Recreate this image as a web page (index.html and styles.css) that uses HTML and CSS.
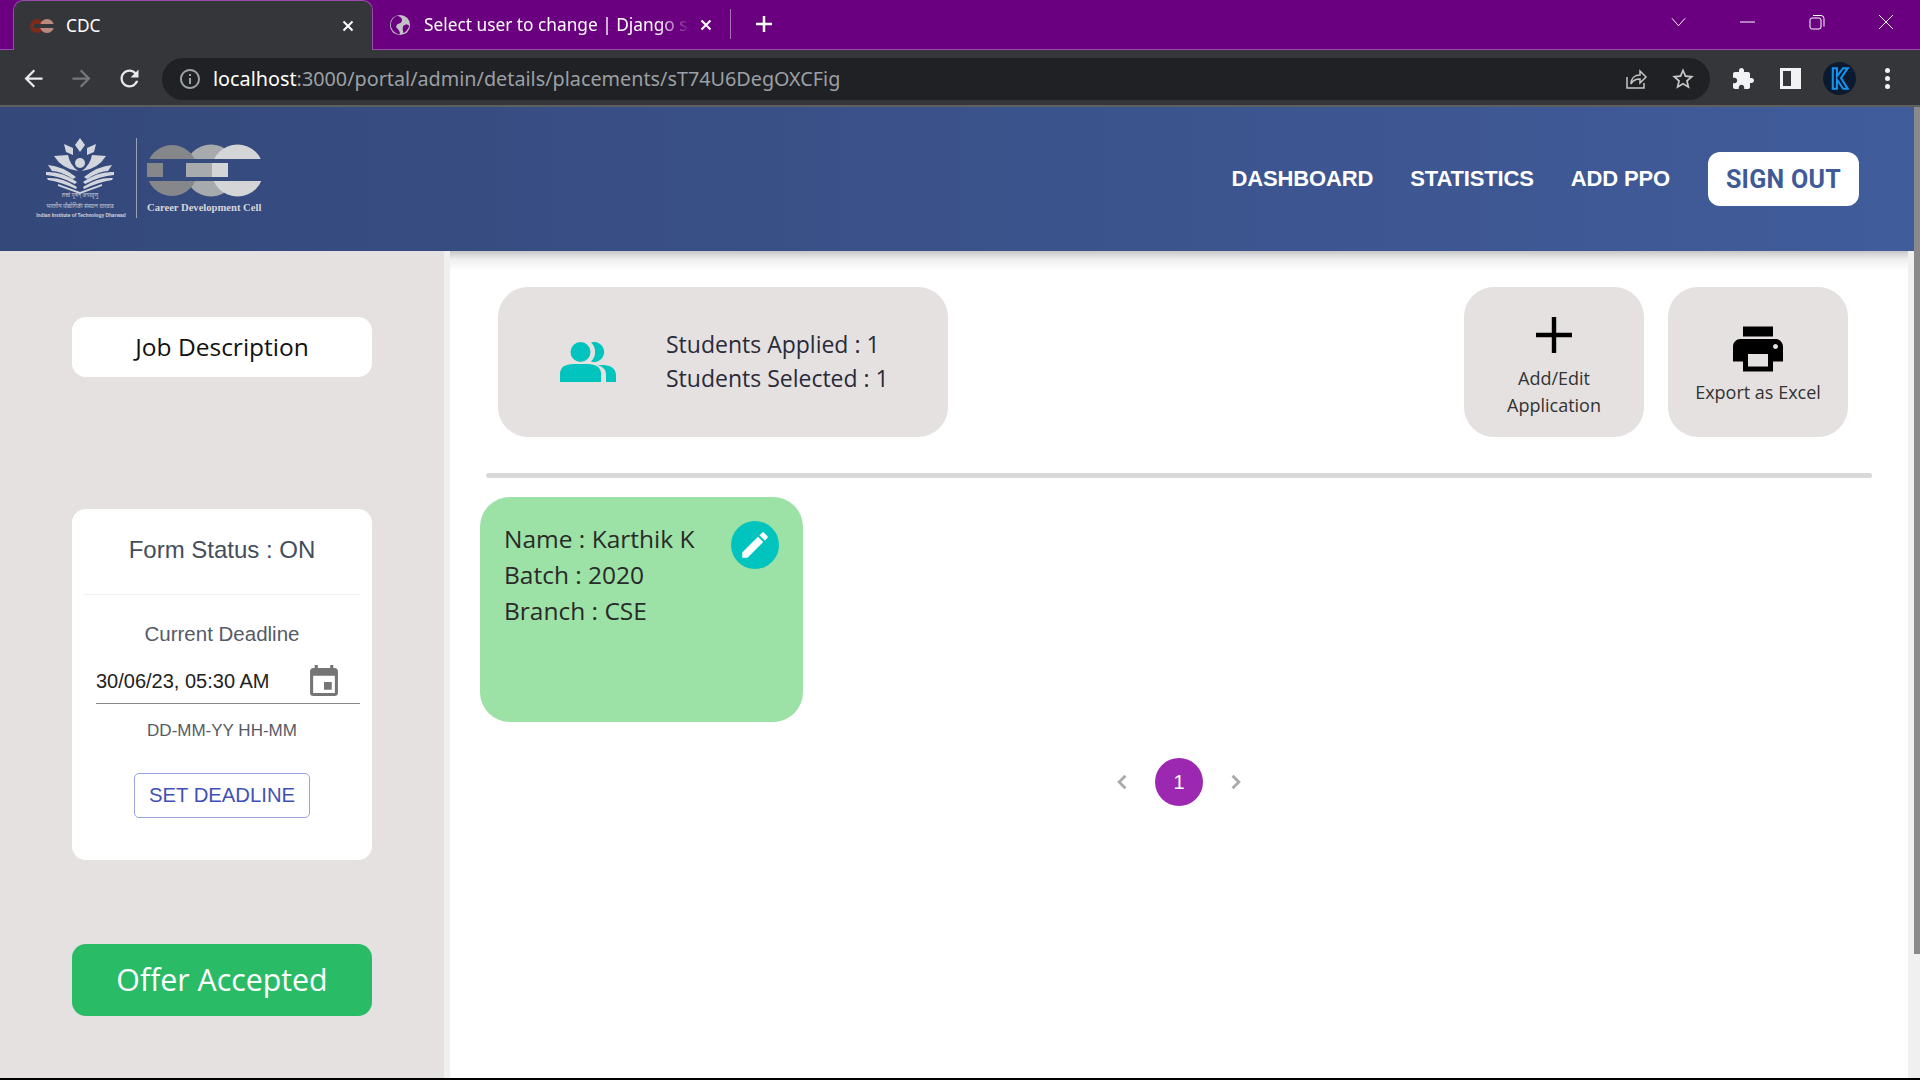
FILE: index.html
```html
<!DOCTYPE html>
<html lang="en">
<head>
  <meta charset="UTF-8" />
  <title>CDC</title>
  <link rel="stylesheet" href="styles.css">
</head>
<body>
  <!-- browser chrome -->
  <div class="tabbar">
    <div class="tab tab-active">
      <svg class="favicon" viewBox="0 0 24 14"><circle cx="7" cy="7" r="7" fill="#7d2a1c"/><circle cx="17" cy="7" r="7" fill="#b9897f"/><rect x="4" y="5" width="20" height="4" fill="#35363a"/></svg>
      <span class="tab-title">CDC</span>
      <svg class="tab-close" viewBox="0 0 12 12"><path d="M1.5 1.5l9 9M10.5 1.5l-9 9"/></svg>
    </div>
    <div class="tab tab-other">
      <svg class="favicon globe" viewBox="0 0 24 24"><circle cx="12" cy="12" r="11" fill="#c4c0c8"/><path d="M10 2c3 2 5 3 4 6s-5 2-6 5 4 3 4 9c-5 0-10-5-10-10S6 2 10 2zM17 12c3-1 4 0 5 1-1 3-3 6-6 8-1-3-2-8 1-9z" fill="#6a007f"/></svg>
      <span class="tab-title tab-fade">Select user to change | Django site admin</span>
      <svg class="tab-close" viewBox="0 0 12 12"><path d="M1.5 1.5l9 9M10.5 1.5l-9 9"/></svg>
    </div>
    <div class="tab-sep"></div>
    <svg class="new-tab" viewBox="0 0 18 18"><path d="M9 1v16M1 9h16"/></svg>
    <div class="window-btns">
      <svg viewBox="0 0 16 10" class="win-chevron"><path d="M1 1l7 8 7-8"/></svg>
      <svg viewBox="0 0 16 16" class="win-min"><path d="M0 8h15"/></svg>
      <svg viewBox="0 0 16 16" class="win-max"><rect x="1" y="4" width="11" height="11" rx="2"/><path d="M4 1.500h8a3 3 0 0 1 3 3v8"/></svg>
      <svg viewBox="0 0 16 16" class="win-close"><path d="M1 1l14 14M15 1L1 15"/></svg>
    </div>
  </div>

  <div class="toolbar">
    <svg class="nav-icon" viewBox="0 0 24 24"><path d="M20 11H7.830l5.590-5.590L12 4l-8 8 8 8 1.410-1.410L7.830 13H20v-2z"/></svg>
    <svg class="nav-icon nav-off" viewBox="0 0 24 24"><path d="M12 4l-1.410 1.410L16.170 11H4v2h12.170l-5.580 5.590L12 20l8-8z"/></svg>
    <svg class="nav-icon" viewBox="0 0 24 24"><path d="M17.650 6.350C16.200 4.900 14.210 4 12 4c-4.420 0-7.990 3.580-7.990 8s3.570 8 7.990 8c3.730 0 6.840-2.550 7.730-6h-2.080c-.82 2.330-3.040 4-5.650 4-3.310 0-6-2.690-6-6s2.690-6 6-6c1.660 0 3.140.69 4.220 1.780L13 11h7V4l-2.350 2.350z"/></svg>
    <div class="omnibox">
      <svg class="info-icon" viewBox="0 0 24 24"><path d="M11 7h2v2h-2zm0 4h2v6h-2zm1-9C6.480 2 2 6.480 2 12s4.480 10 10 10 10-4.480 10-10S17.520 2 12 2zm0 18c-4.410 0-8-3.590-8-8s3.590-8 8-8 8 3.590 8 8-3.590 8-8 8z"/></svg>
      <span class="url"><span class="url-host">localhost</span>:3000/portal/admin/details/placements/sT74U6DegOXCFig</span>
      <svg class="share-icon" viewBox="0 0 24 24"><path d="M3 10v11h17v-5M7 17c0-6 4-9 9-9V4l6 6-6 6v-4c-4 0-7 1-9 5z"/></svg>
      <svg class="star-icon" viewBox="0 0 24 24"><path d="M22 9.240l-7.190-.62L12 2 9.190 8.630 2 9.240l5.460 4.730L5.820 21 12 17.270 18.180 21l-1.630-7.030L22 9.240zM12 15.400l-3.760 2.270 1-4.280-3.320-2.880 4.380-.38L12 6.100l1.710 4.040 4.380.38-3.320 2.880 1 4.280L12 15.400z"/></svg>
    </div>
    <svg class="ext-icon" viewBox="0 0 24 24"><path d="M20.500 11H19V7c0-1.100-.9-2-2-2h-4V3.500C13 2.120 11.880 1 10.500 1S8 2.120 8 3.500V5H4c-1.100 0-1.990.9-1.990 2v3.800H3.500c1.490 0 2.700 1.210 2.700 2.700s-1.210 2.700-2.700 2.700H2V20c0 1.100.9 2 2 2h3.800v-1.500c0-1.490 1.210-2.700 2.700-2.700 1.490 0 2.700 1.210 2.700 2.700V22H17c1.100 0 2-.9 2-2v-4h1.500c1.380 0 2.500-1.120 2.500-2.500S21.880 11 20.500 11z"/></svg>
    <div class="side-panel"></div>
    <svg class="avatar" viewBox="0 0 32 32"><circle cx="16" cy="16" r="16" fill="#0b1a2e"/><path d="M9.500 6h4v8l6-8h4.500l-6.500 9.500 6.500 10.500h-4.500l-6-9v9h-4z" fill="none" stroke="#1593f0" stroke-width="2"/></svg>
    <div class="kebab"><i></i><i></i><i></i></div>
  </div>

  <div class="page">
    <header class="site-header">
      <svg class="logo" viewBox="30 130 240 100">
        <defs>
          <clipPath id="logoBands"><rect x="140" y="140" width="130" height="20"/><rect x="140" y="182" width="130" height="20"/></clipPath>
          <clipPath id="logoMid"><rect x="186" y="140" width="60" height="20"/><rect x="186" y="182" width="60" height="20"/></clipPath>
          <g id="halfLotus" fill="#d3d6dc">
            <path d="M64 145l9 4v7l-7-3z"/>
            <path d="M54 157l14-1q2 10 10 16q-16-2-24-15z"/>
            <path d="M48 166q14 1 28 12l-3 2q-13-8-21-8z"/>
            <path d="M46 173q16-1 31 10l-2 2q-15-8-29-9z"/>
            <path d="M47 179q15-1 30 9l-1 2q-15-7-28-9z"/>
            <path d="M58 185l22 8v2l-22-8z"/>
          </g>
        </defs>
        <use href="#halfLotus"/>
        <use href="#halfLotus" transform="matrix(-1 0 0 1 160 0)"/>
        <path d="M80 139l5 7-5 7-5-7z" fill="#d3d6dc"/>
        <circle cx="80" cy="164" r="5" fill="#d3d6dc"/>
        <text class="logo-hindi" x="80" y="198">तत्त्वं पूषन् अपावृणु</text>
        <text class="logo-hindi" x="80" y="209">भारतीय प्रौद्योगिकी संस्थान धारवाड</text>
        <text class="logo-iit" x="81" y="218">Indian Institute of Technology Dharwad</text>
        <rect x="136" y="139" width="1" height="80" fill="#98a1b6"/>
        <circle cx="211" cy="171.500" r="26" fill="#a8abad" clip-path="url(#logoMid)"/>
        <circle cx="172" cy="171.500" r="25.500" fill="#85878a" clip-path="url(#logoBands)"/>
        <circle cx="237.500" cy="171.500" r="26" fill="#d3d5d7" clip-path="url(#logoBands)"/>
        <rect x="186" y="164" width="26" height="14" fill="#a8abad"/>
        <rect x="147" y="164" width="16" height="14" fill="#85878a"/>
        <rect x="212" y="164" width="16" height="14" fill="#d3d5d7"/>
        <text class="logo-cdc" x="147" y="212">Career Development Cell</text>
      </svg>
      <nav class="site-nav">
        <a>DASHBOARD</a>
        <a>STATISTICS</a>
        <a>ADD PPO</a>
        <button class="signout">SIGN OUT</button>
      </nav>
    </header>

    <div class="layout">
      <aside class="sidebar">
        <div class="jd-btn">Job Description</div>
        <div class="form-card">
          <div class="form-status">Form Status : ON</div>
          <div class="form-divider"></div>
          <div class="deadline-label">Current Deadline</div>
          <div class="date-field">
            <span>30/06/23, 05:30 AM</span>
            <svg viewBox="3 1 18 20"><path d="M17 12h-5v5h5v-5zM16 1v2H8V1H6v2H5c-1.110 0-1.990.9-1.990 2L3 19c0 1.100.89 2 2 2h14c1.100 0 2-.9 2-2V5c0-1.100-.9-2-2-2h-1V1h-2zm3 18H5V8h14v11z"/></svg>
          </div>
          <div class="date-hint">DD-MM-YY HH-MM</div>
          <button class="set-deadline">SET DEADLINE</button>
        </div>
        <div class="offer-btn">Offer Accepted</div>
      </aside>

      <main class="content">
        <div class="top-row">
          <div class="stats-card">
            <svg class="stats-icon" viewBox="0 0 56 40">
              <circle cx="20.500" cy="10" r="10"/>
              <path d="M0 40v-8q0-10 14-10h13q14 0 14 10v8z"/>
              <path d="M31 .5a10 10 0 1 1 0 19a13 13 0 0 0 0-19z"/>
              <path d="M38 23h6q12 1 12 11v6H46v-8q0-6-8-9z"/>
            </svg>
            <div class="stats-text">
              <div>Students Applied : 1</div>
              <div>Students Selected : 1</div>
            </div>
          </div>
          <div class="action-card action-add">
            <svg class="plus-icon" viewBox="0 0 36 36"><path d="M15.800 0h4.400v15.800H36v4.400H20.200V36h-4.400V20.200H0v-4.400h15.800z"/></svg>
            <div>Add/Edit<br>Application</div>
          </div>
          <div class="action-card action-export">
            <svg class="print-icon" viewBox="2 3 20 18"><path d="M19 8H5c-1.660 0-3 1.340-3 3v6h4v4h12v-4h4v-6c0-1.660-1.340-3-3-3zm-3 11H8v-5h8v5zm3-7c-.55 0-1-.45-1-1s.45-1 1-1 1 .45 1 1-.45 1-1 1zm-1-9H6v4h12V3z"/></svg>
            <div>Export as Excel</div>
          </div>
        </div>
        <div class="content-rule"></div>
        <div class="student-card">
          <div class="student-info">
            <div>Name : Karthik K</div>
            <div>Batch : 2020</div>
            <div>Branch : CSE</div>
          </div>
          <div class="edit-btn">
            <svg viewBox="0 0 24 24"><path d="M3 17.250V21h3.750L17.810 9.940l-3.750-3.750L3 17.250zM20.710 7.040c.39-.39.39-1.020 0-1.410l-2.340-2.340c-.39-.39-1.020-.39-1.410 0l-1.830 1.830 3.750 3.750 1.830-1.830z"/></svg>
          </div>
        </div>
        <div class="pagination">
          <svg viewBox="0 0 10 14"><path d="M8 1.500L2.500 7 8 12.500"/></svg>
          <span class="page-num">1</span>
          <svg viewBox="0 0 10 14"><path d="M2 1.500L7.500 7 2 12.500"/></svg>
        </div>
      </main>
    </div>

    <div class="scrollbar"><div class="scroll-thumb"></div></div>
  </div>
  <div class="bottom-edge"></div>
</body>
</html>
```
FILE: styles.css
```css
* { box-sizing: border-box; }
html, body { margin: 0; height: 100%; overflow: hidden; }
body { display: flex; flex-direction: column; font-family: "Open Sans", sans-serif; background: #fff; }

/* browser chrome */
.tabbar { height: 50px; background: #6a007f; border-bottom: 1px solid #9b4aae; display: flex; align-items: flex-end; padding-left: 13px; flex: none; }
.tab { height: 49px; display: flex; align-items: center; color: #fff; font-size: 17.300px; font-family: "Noto Sans", sans-serif; }
.tab-active { width: 360px; background: #35363a; border: 1px solid #9b4aae; border-bottom: none; border-radius: 10px 10px 0 0; padding: 0 18px 0 16px; margin-bottom: -1px; height: 50px; }
.tab-other { width: 355px; padding: 0 16px 0 16px; }
.favicon { width: 24px; height: 14px; margin-right: 12px; flex: none; }
.globe { width: 22px; height: 22px; margin-right: 13px; }
.tab-title { flex: 1; white-space: nowrap; overflow: hidden; }
.tab-fade { -webkit-mask-image: linear-gradient(to right, #000 88%, transparent 100%); mask-image: linear-gradient(to right, #000 88%, transparent 100%); }
.tab-close { width: 12px; height: 12px; margin-left: 10px; flex: none; }
.tab-close path { stroke: #fff; stroke-width: 2; fill: none; }
.tab-sep { width: 1px; height: 30px; background: #a974b5; margin-bottom: 10px; margin-left: 2px; }
.new-tab { width: 18px; height: 18px; margin: 0 0 16px 24px; }
.new-tab path { stroke: #fff; stroke-width: 2.500; fill: none; }
.window-btns { margin-left: auto; display: flex; align-items: center; align-self: stretch; padding-bottom: 6px; }
.window-btns svg { fill: none; stroke: #fff; stroke-width: 1; }
.win-chevron { width: 15px; height: 10px; margin-right: 54px; stroke: #ddd; }
.win-min { width: 16px; height: 16px; margin-right: 53px; }
.win-max { width: 16px; height: 16px; margin-right: 53px; }
.win-close { width: 16px; height: 16px; margin-right: 26px; }

.toolbar { height: 55px; background: #35363a; display: flex; align-items: center; padding: 2px 0 0 20px; flex: none; }
.nav-icon { width: 27px; height: 27px; fill: #e8eaed; margin-right: 21px; flex: none; }
.nav-off { fill: #75777b; }
.omnibox { width: 1548px; height: 42px; margin-left: -2px; background: #202124; border-radius: 21px; display: flex; align-items: center; padding: 0 14px 0 16px; flex: none; }
.info-icon { width: 24px; height: 24px; fill: #9aa0a6; margin-right: 11px; flex: none; }
.url { flex: 1; font-family: "Noto Sans", sans-serif; font-size: 19.800px; color: #9aa0a6; white-space: nowrap; }
.url-host { color: #fff; }
.share-icon { width: 24px; height: 24px; fill: none; stroke: #c4c7c5; stroke-width: 1.500; margin-right: 22px; }
.star-icon { width: 26px; height: 26px; fill: #c4c7c5; }
.ext-icon { width: 24px; height: 24px; fill: #f1f3f4; margin-left: 21px; flex: none; }
.side-panel { width: 21px; height: 21px; margin-left: 25px; border: 3px solid #f1f3f4; border-right-width: 10px; flex: none; }
.avatar { width: 33px; height: 33px; margin-left: 22px; flex: none; }
.kebab { display: flex; flex-direction: column; gap: 3px; margin-left: 29px; }
.kebab i { width: 5px; height: 5px; border-radius: 50%; background: #f1f3f4; }

/* page */
.page { position: relative; flex: 1; border-top: 2px solid #5f5f5f; display: flex; flex-direction: column; min-height: 0; }
.site-header { position: relative; z-index: 2; height: 144px; margin-right: 6px; background: linear-gradient(to right, #34487a, #415c9b); display: flex; align-items: center; justify-content: space-between; flex: none; }
.logo { width: 240px; height: 100px; margin: 0 0 0 30px; flex: none; }
.logo-hindi { font: 5.500px "Noto Sans", "Liberation Sans", sans-serif; fill: #c3c8d2; text-anchor: middle; }
.logo-iit { font: bold 4.800px "Liberation Sans", sans-serif; fill: #d3d6dc; text-anchor: middle; }
.logo-cdc { font: bold 10.600px "Liberation Serif", serif; fill: #d3d6dc; }
.site-nav { display: flex; align-items: center; gap: 37px; padding-right: 55px; }
.site-nav a { color: #fff; font: bold 22px "Liberation Sans", sans-serif; letter-spacing: -.15px; }
.signout { width: 151px; height: 54px; margin-left: 1px; background: #fff; color: #3f5a97; border: none; border-radius: 12px; font: bold 25px Roboto, sans-serif; letter-spacing: .3px; }

.layout { flex: 1; display: flex; min-height: 0; }
.sidebar { width: 450px; background: #e4e1e0; border-right: 6px solid #f0f0f0; padding: 66px 0 0 72px; flex: none; }
.jd-btn { width: 300px; height: 60px; padding-bottom: 2px; background: #fff; border-radius: 14px; display: flex; align-items: center; justify-content: center; font-size: 24.500px; color: #111; }
.form-card { width: 300px; height: 351px; margin-top: 132px; background: #fff; border-radius: 14px; padding: 0 12px; font-family: "Liberation Sans", sans-serif; display: flex; flex-direction: column; align-items: center; }
.form-status { margin-top: 26px; font-size: 24px; line-height: 30px; color: #444e5a; }
.form-divider { width: 100%; height: 1px; margin-top: 29px; background: #f1f1f1; }
.deadline-label { margin-top: 26px; font-size: 20.500px; line-height: 26px; color: #555b66; }
.date-field { width: 264px; height: 45px; margin-left: 12px; margin-top: 12px; border-bottom: 1px solid #888; display: flex; align-items: center; justify-content: space-between; padding-right: 22px; font-size: 20px; color: #222; }
.date-field svg { width: 28px; height: 31px; margin-bottom: 2px; fill: #757575; }
.date-hint { margin-top: 16px; font-size: 17px; line-height: 22px; color: #555b66; }
.set-deadline { width: 176px; height: 45px; margin-top: 31px; background: #fff; border: 1px solid #9aa5dd; border-radius: 5px; color: #3f51b5; font: 20.300px "Liberation Sans", sans-serif; }
.offer-btn { width: 300px; height: 72px; margin-top: 84px; padding-bottom: 2px; background: #2abb67; border-radius: 14px; color: #fff; display: flex; align-items: center; justify-content: center; font-size: 30.300px; }

.content { flex: 1; padding: 36px 0 0 30px; min-width: 0; background: linear-gradient(#c6c6c6, #eee 8px, #fff 20px); }
.top-row { display: flex; gap: 24px; padding: 0 72px 0 18px; }
.stats-card { width: 450px; height: 150px; margin-right: auto; background: #e4e1e0; border-radius: 30px; display: flex; align-items: center; padding-left: 62px; gap: 50px; }
.stats-icon { width: 56px; height: 40px; fill: #00c4bd; }
.stats-text { font-size: 23px; line-height: 34px; color: #2a2a3a; margin-bottom: 2px; }
.action-card { width: 180px; height: 150px; background: #e4e1e0; border-radius: 30px; display: flex; flex-direction: column; align-items: center; justify-content: center; text-align: center; font-size: 18px; line-height: 27px; color: #333; }
.action-add { padding-top: 12px; }
.action-export { padding-top: 7px; }
.plus-icon { width: 36px; height: 36px; margin-bottom: 12px; }
.print-icon { width: 50px; height: 46px; margin-bottom: 7px; }
.content-rule { width: 1386px; height: 5px; margin: 36px 0 19px 6px; background: #d9d9d9; border-radius: 3px; }
.student-card { width: 323px; height: 225px; background: #9ce1a5; border-radius: 30px; padding: 24px 24px 0 24px; display: flex; justify-content: space-between; align-items: flex-start; }
.student-info { font-size: 24.500px; line-height: 36px; color: #2a2a2a; }
.edit-btn { width: 48px; height: 48px; background: #00c4bd; border-radius: 50%; display: flex; align-items: center; justify-content: center; }
.edit-btn svg { width: 34px; height: 34px; fill: #fff; }
.pagination { width: 1386px; margin: 36px 0 0 6px; display: flex; align-items: center; justify-content: center; gap: 23px; }
.pagination svg { width: 12px; height: 16px; fill: none; stroke: #aaa; stroke-width: 2.500; }
.page-num { width: 48px; height: 48px; background: #9c27b0; border-radius: 50%; color: #fff; display: flex; align-items: center; justify-content: center; font: 20px "Liberation Sans", sans-serif; margin: 0 4px; }

.scrollbar { position: absolute; top: 0; right: 0; bottom: 0; width: 12px; background: #f0f0f0; }
.scroll-thumb { width: 6px; height: 847px; margin-left: 6px; background: #8a8a8a; }
.bottom-edge { height: 2px; background: #000; flex: none; }
```
